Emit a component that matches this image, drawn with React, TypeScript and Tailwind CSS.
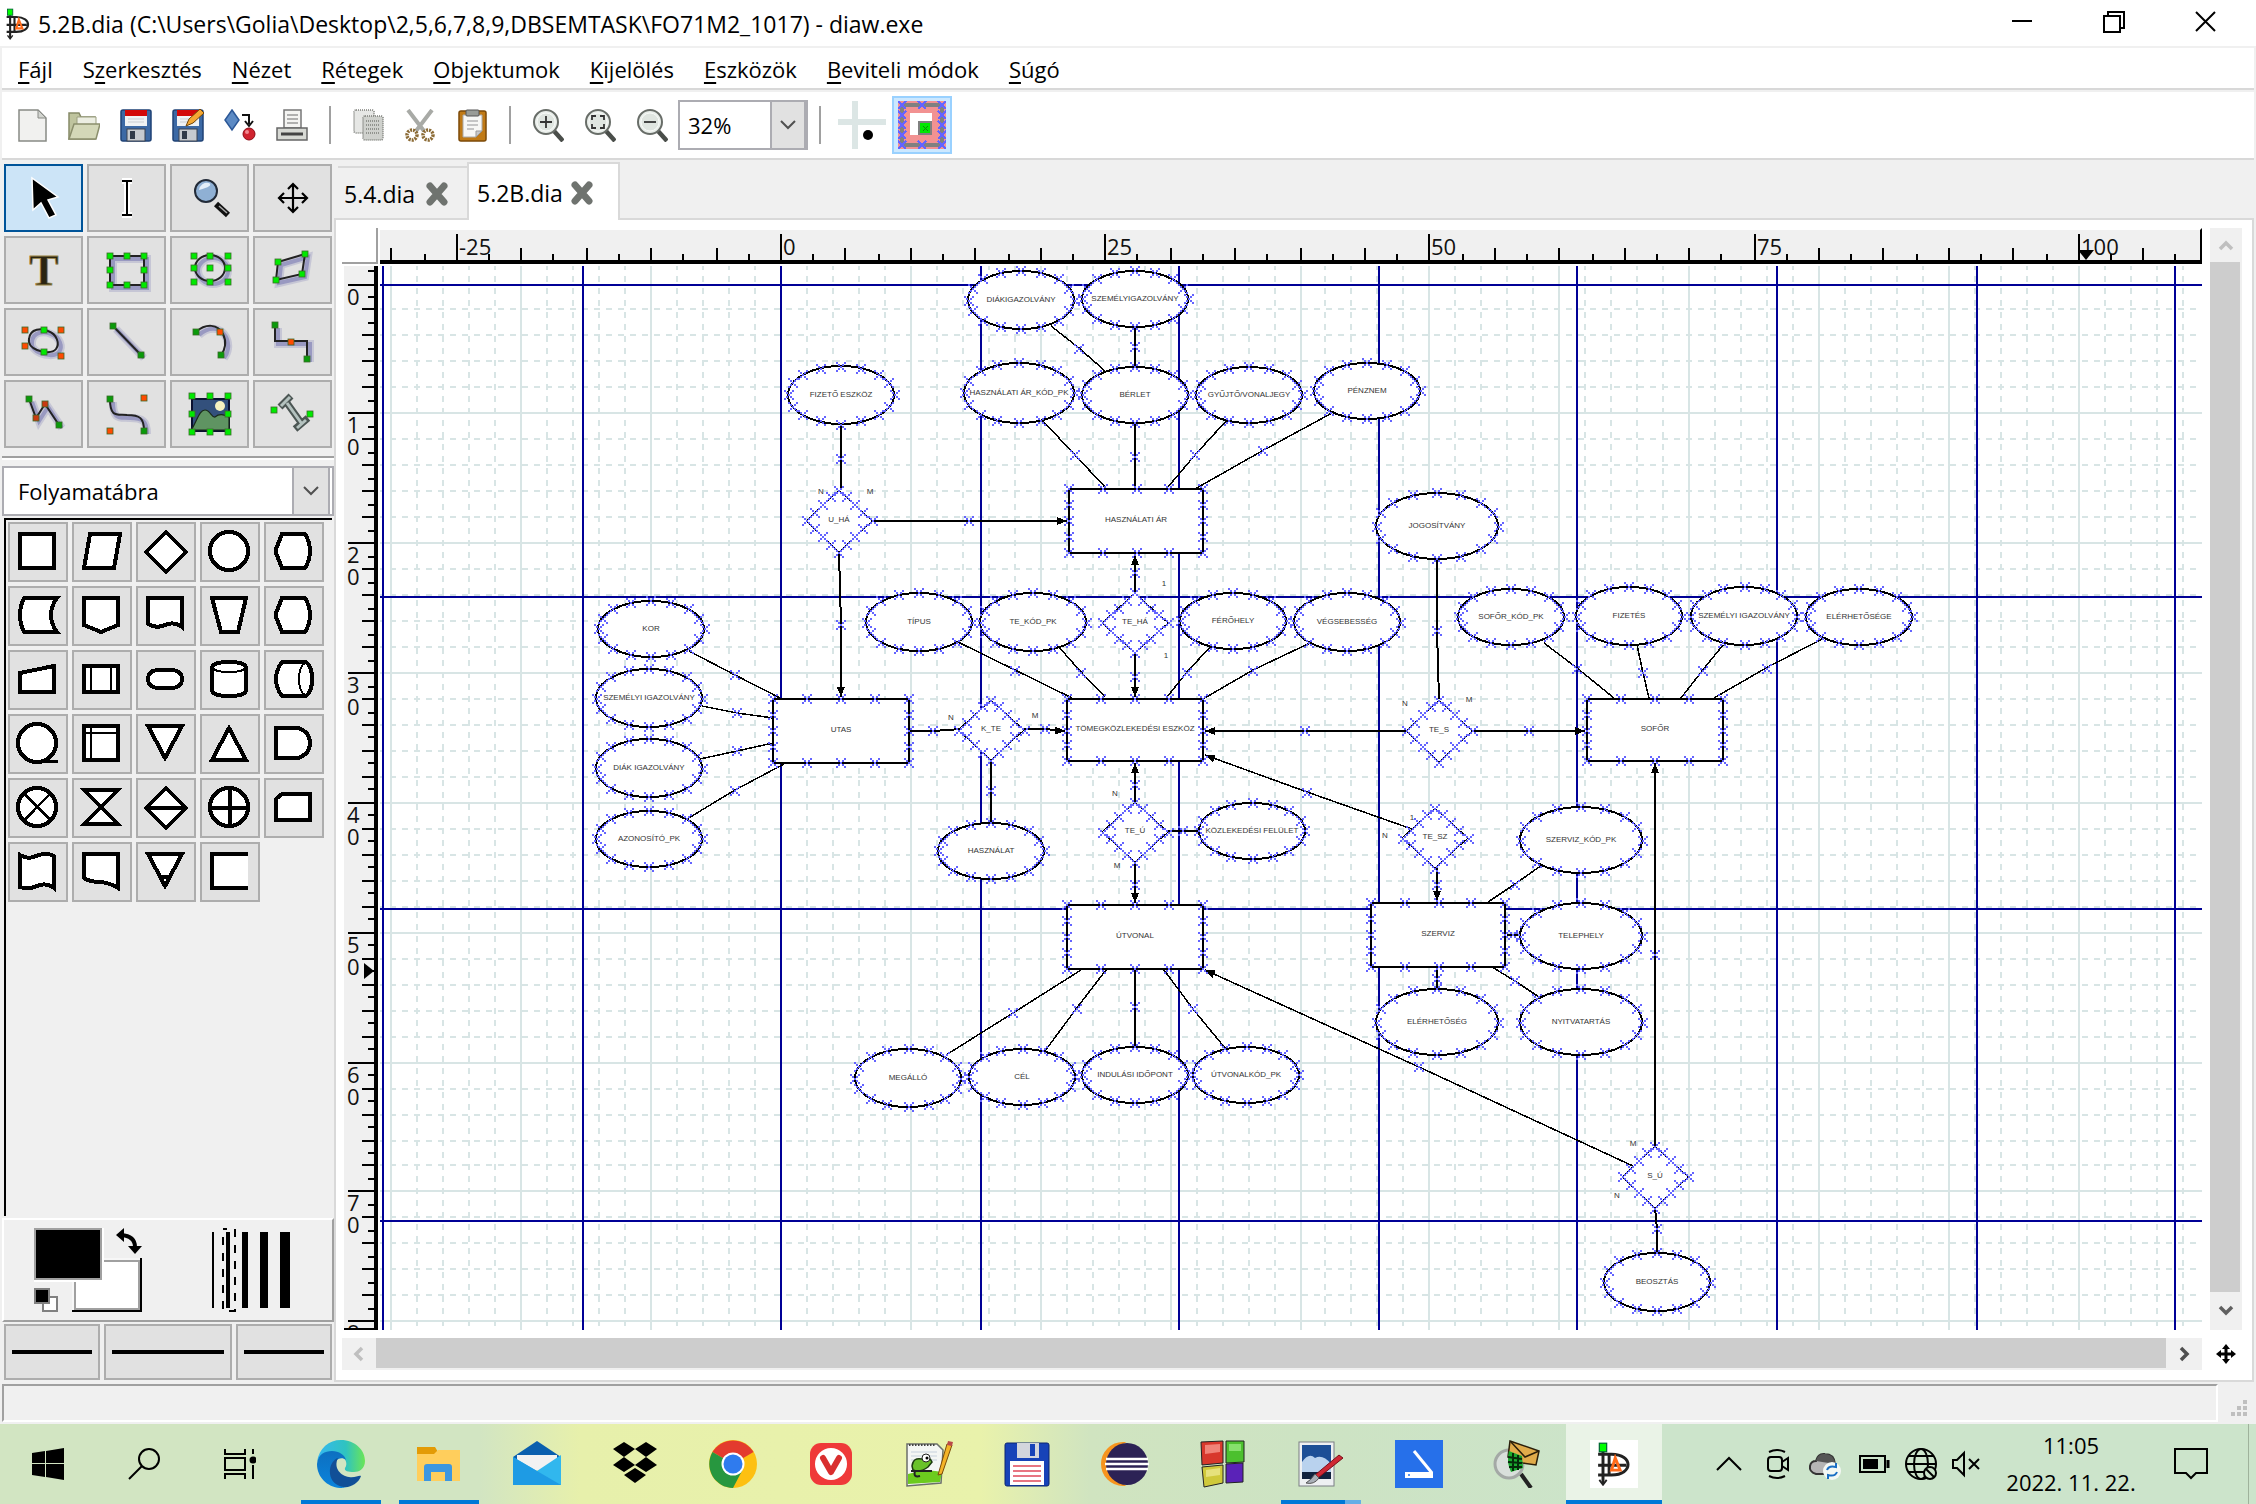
import React from "react";

/* ---------- helpers ---------- */
const odd = (v: number) => 2 * Math.floor(v / 2) + 1;

const MENUS: [string, number][] = [
  ["Fájl", 0],
  ["Szerkesztés", 1],
  ["Nézet", 0],
  ["Rétegek", 0],
  ["Objektumok", 0],
  ["Kijelölés", 0],
  ["Eszközök", 0],
  ["Beviteli módok", 0],
  ["Súgó", 0],
];

/* ---------- diagram data ---------- */
type Ell = [string, number, number, number, number];
const ELLIPSES: Ell[] = [
  ["DIÁKIGAZOLVÁNY", 1021, 300, 53, 29],
  ["SZEMÉLYIGAZOLVÁNY", 1135, 299, 53, 28],
  ["HASZNÁLATI ÁR_KÓD_PK", 1019, 393, 55, 30],
  ["BÉRLET", 1135, 395, 53, 28],
  ["GYŰJTŐ/VONALJEGY", 1249, 395, 53, 28],
  ["PÉNZNEM", 1367, 391, 53, 28],
  ["FIZETŐ ESZKÖZ", 841, 395, 53, 29],
  ["JOGOSÍTVÁNY", 1437, 526, 61, 33],
  ["KOR", 651, 629, 53, 28],
  ["SZEMÉLYI IGAZOLVÁNY", 649, 698, 53, 29],
  ["DIÁK IGAZOLVÁNY", 649, 768, 53, 29],
  ["AZONOSÍTÓ_PK", 649, 839, 53, 28],
  ["TÍPUS", 919, 622, 53, 29],
  ["TE_KÓD_PK", 1033, 622, 53, 29],
  ["FÉRŐHELY", 1233, 621, 53, 28],
  ["VÉGSEBESSÉG", 1347, 622, 53, 29],
  ["SOFŐR_KÓD_PK", 1511, 617, 53, 28],
  ["FIZETÉS", 1629, 616, 53, 29],
  ["SZEMÉLYI IGAZOLVÁNY", 1744, 616, 53, 29],
  ["ELÉRHETŐSÉGE", 1859, 617, 53, 28],
  ["HASZNÁLAT", 991, 851, 53, 28],
  ["KÖZLEKEDÉSI FELÜLET", 1252, 831, 53, 28],
  ["SZERVIZ_KÓD_PK", 1581, 840, 61, 33],
  ["TELEPHELY", 1581, 936, 61, 33],
  ["NYITVATARTÁS", 1581, 1022, 61, 33],
  ["ELÉRHETŐSÉG", 1437, 1022, 61, 33],
  ["MEGÁLLÓ", 908, 1078, 53, 29],
  ["CÉL", 1022, 1077, 53, 28],
  ["INDULÁSI IDŐPONT", 1135, 1075, 53, 28],
  ["ÚTVONALKÓD_PK", 1246, 1075, 53, 28],
  ["BEOSZTÁS", 1657, 1282, 53, 29],
];
const RECTS: Ell[] = [
  ["HASZNÁLATI ÁR", 1069, 489, 1203, 553],
  ["UTAS", 773, 699, 909, 763],
  ["TÖMEGKÖZLEKEDÉSI ESZKÖZ", 1067, 699, 1203, 761],
  ["SOFŐR", 1587, 699, 1723, 761],
  ["ÚTVONAL", 1067, 905, 1203, 969],
  ["SZERVIZ", 1371, 903, 1505, 967],
];
const DIAMONDS: Ell[] = [
  ["U_HÁ", 839, 521, 33, 31],
  ["TE_HÁ", 1135, 623, 33, 30],
  ["K_TE", 991, 730, 33, 30],
  ["TE_Ú", 1135, 832, 33, 30],
  ["TE_S", 1439, 731, 33, 31],
  ["TE_SZ", 1435, 838, 33, 30],
  ["S_Ú", 1655, 1177, 33, 31],
];
/* x1, y1, x2, y2, midpoint x, midpoint y, arrow at the end */
const LINKS: number[][] = [
  [841, 424, 841, 490, 841, 458, 0],
  [873, 521, 1067, 521, 969, 521, 1],
  [839, 552, 841, 697, 841, 624, 1],
  [1051, 326, 1105, 371, 1079, 348, 0],
  [1135, 327, 1135, 367, 1135, 347, 0],
  [1043, 421, 1105, 487, 1075, 455, 0],
  [1135, 423, 1135, 489, 1135, 456, 0],
  [1226, 421, 1168, 487, 1195, 455, 0],
  [1332, 413, 1195, 489, 1262, 451, 0],
  [1135, 594, 1135, 555, 1135, 573, 1],
  [1135, 653, 1135, 697, 1135, 676, 1],
  [1437, 560, 1439, 699, 1437, 630, 0],
  [1407, 731, 1205, 731, 1305, 731, 1],
  [1472, 731, 1585, 731, 1529, 731, 1],
  [1412, 829, 1205, 755, 1307, 792, 1],
  [1437, 867, 1437, 901, 1437, 885, 1],
  [1542, 865, 1488, 902, 1515, 884, 0],
  [1507, 935, 1520, 935, 1513, 935, 0],
  [1437, 967, 1437, 989, 1437, 978, 0],
  [1492, 967, 1539, 997, 1515, 981, 0],
  [1655, 1146, 1655, 763, 1655, 954, 1],
  [1633, 1166, 1205, 970, 1419, 1067, 1],
  [1655, 1207, 1657, 1253, 1657, 1229, 0],
  [689, 651, 780, 698, 735, 675, 0],
  [702, 706, 773, 718, 737, 713, 0],
  [700, 759, 773, 743, 737, 751, 0],
  [687, 819, 784, 764, 735, 790, 0],
  [958, 642, 1072, 698, 1015, 670, 0],
  [1058, 646, 1105, 697, 1081, 672, 0],
  [1210, 647, 1167, 697, 1187, 672, 0],
  [1310, 643, 1203, 699, 1253, 670, 0],
  [961, 729, 909, 731, 933, 731, 0],
  [1023, 729, 1065, 731, 1045, 729, 1],
  [991, 760, 991, 823, 991, 791, 0],
  [1135, 803, 1135, 763, 1135, 784, 1],
  [1135, 861, 1135, 903, 1135, 884, 1],
  [1168, 831, 1200, 831, 1183, 831, 0],
  [1544, 643, 1614, 698, 1577, 668, 0],
  [1637, 645, 1649, 698, 1643, 673, 0],
  [1723, 645, 1681, 698, 1702, 671, 0],
  [1822, 639, 1714, 698, 1766, 668, 0],
  [946, 1055, 1081, 970, 1013, 1013, 0],
  [1045, 1051, 1106, 970, 1076, 1009, 0],
  [1135, 1047, 1135, 969, 1135, 1007, 0],
  [1225, 1048, 1164, 970, 1193, 1009, 0],
];
const CARDINALITIES: [string, number, number][] = [
  ["N", 821, 491],
  ["M", 870, 491],
  ["1", 1164, 583],
  ["1", 1166, 655],
  ["N", 951, 717],
  ["M", 1035, 715],
  ["N", 1115, 793],
  ["M", 1117, 865],
  ["N", 1405, 703],
  ["M", 1469, 699],
  ["1", 1412, 817],
  ["N", 1385, 835],
  ["M", 1633, 1143],
  ["N", 1617, 1195],
];
const PAGE_X = [383, 583, 781, 981, 1179, 1379, 1577, 1777, 1977, 2175, 2375, 2573];
const PAGE_Y = [285, 597, 909, 1221, 1533];

/* small pixel cross that marks a connection point */
function cross(x: number, y: number) {
  const cx = odd(x);
  const cy = odd(y);
  let d = "";
  for (const [dx, dy] of [
    [-4, -4], [-2, -2], [0, 0], [2, 2], [4, 4], [4, -4], [2, -2], [-2, 2], [-4, 4],
  ]) {
    d += `M${cx + dx - 1} ${cy + dy - 1}h2v2h-2z`;
  }
  return d;
}

function diagramCrosses() {
  let d = "";
  for (const [, cx, cy, rx, ry] of ELLIPSES)
    for (let i = 0; i < 16; i++) {
      const a = (i * Math.PI) / 8;
      d += cross(cx + rx * Math.cos(a), cy + ry * Math.sin(a));
    }
  for (const [, x1, y1, x2, y2] of RECTS)
    for (let i = 0; i < 5; i++) {
      const x = x1 + ((x2 - x1) * i) / 4;
      const y = y1 + ((y2 - y1) * i) / 4;
      d += cross(x, y1) + cross(x, y2);
      if (i > 0 && i < 4) d += cross(x1, y) + cross(x2, y);
    }
  for (const [, cx, cy, w, h] of DIAMONDS)
    for (let i = 0; i < 4; i++) {
      const t = i / 4;
      d += cross(cx + w * t, cy - h * (1 - t));
      d += cross(cx + w * (1 - t), cy + h * t);
      d += cross(cx - w * t, cy + h * (1 - t));
      d += cross(cx - w * (1 - t), cy - h * t);
    }
  for (const l of LINKS) d += cross(l[4], l[5]);
  return d;
}

function arrow(l: number[]) {
  const [x1, y1, x2, y2] = l;
  const len = Math.hypot(x2 - x1, y2 - y1);
  const ux = (x2 - x1) / len;
  const uy = (y2 - y1) / len;
  const bx = x2 - ux * 10;
  const by = y2 - uy * 10;
  return `M${x2} ${y2}L${bx - uy * 4} ${by + ux * 4}L${bx + uy * 4} ${by - ux * 4}z`;
}

const isDiagonal = (l: number[]) => Math.abs(l[2] - l[0]) > 10 && Math.abs(l[3] - l[1]) > 10;

function Diagram() {
  const grid: React.ReactNode[] = [];
  for (let k = -15; k < 75; k++) {
    const x = odd(781 + k * 25.95);
    grid.push(
      <path key={"v" + k} d={`M${x} 266V2000`} strokeDasharray={k % 5 ? "6 6" : undefined} strokeDashoffset={2} />
    );
  }
  for (let k = 1; k < 60; k++) {
    const y = odd(284 + k * 25.94);
    grid.push(
      <path key={"h" + k} d={`M380 ${y}H3000`} strokeDasharray={k % 5 ? "6 6" : undefined} strokeDashoffset={2} />
    );
  }
  return (
    <svg className="block h-full w-full bg-white" role="img" aria-label="5.2B.dia" shapeRendering="crispEdges">
      <g transform="translate(-380 -266)">
        <g stroke="#d8e5e5" strokeWidth="2">{grid}</g>
        <g stroke="#000096" strokeWidth="2">
          {PAGE_X.map((x) => (
            <path key={x} d={`M${x} 266V2000`} />
          ))}
          {PAGE_Y.map((y) => (
            <path key={y} d={`M380 ${y}H3000`} />
          ))}
        </g>
        <g fill="#fff" stroke="#000" strokeWidth="2">
          {ELLIPSES.map(([t, cx, cy, rx, ry], i) => (
            <ellipse key={t + i} cx={cx} cy={cy} rx={rx} ry={ry} />
          ))}
          {RECTS.map(([t, a, b, c, d]) => (
            <rect key={t} x={a} y={b} width={c - a} height={d - b} />
          ))}
          {DIAMONDS.map(([t, cx, cy, w, h]) => (
            <path key={t} d={`M${cx} ${cy - h}L${cx + w} ${cy}L${cx} ${cy + h}L${cx - w} ${cy}z`} strokeWidth="1" />
          ))}
          {LINKS.map((l, i) => (
            <path
              key={i}
              d={`M${l[0]} ${l[1]}L${l[4]} ${l[5]}L${l[2]} ${l[3]}`}
              fill="none"
              strokeWidth={isDiagonal(l) ? 1.5 : 2}
            />
          ))}
        </g>
        <path d={LINKS.filter((l) => l[6]).map(arrow).join("")} fill="#000" />
        <path d={diagramCrosses()} fill="#6464ff" />
        <g fill="#333" fontSize="8" textAnchor="middle" fontFamily="'Liberation Sans', sans-serif">
          {ELLIPSES.map(([t, cx, cy], i) => (
            <text key={t + i} x={cx} y={cy + 2}>{t}</text>
          ))}
          {RECTS.map(([t, a, b, c, d]) => (
            <text key={t} x={(a + c) / 2} y={Math.round((b + d) / 2) + 1}>{t}</text>
          ))}
          {DIAMONDS.map(([t, cx, cy]) => (
            <text key={t} x={cx} y={cy + 1}>{t}</text>
          ))}
          {CARDINALITIES.map(([t, x, y], i) => (
            <text key={i} x={x} y={y + 3}>{t}</text>
          ))}
        </g>
      </g>
    </svg>
  );
}

function HorizontalRuler() {
  const items: React.ReactNode[] = [];
  for (let k = -12; k < 60; k++) {
    const x = odd(401 + k * 32.44);
    const top = k % 10 === 0 ? 4 : k % 2 === 0 ? 18 : 24;
    items.push(<path key={k} d={`M${x} ${top}V30`} stroke="#000" strokeWidth="2" />);
    if (k % 10 === 0)
      items.push(
        <text key={"t" + k} x={x + 2} y={25} fontSize="22" fill="#111">{k * 2.5}</text>
      );
  }
  return (
    <svg className="block h-[30px] w-full overflow-x-clip overflow-y-visible" fontFamily="'Open Sans', sans-serif">
      {items}
      <path d="M1698 20H1714L1706 30z" />
    </svg>
  );
}

function VerticalRuler() {
  const items: React.ReactNode[] = [];
  for (let k = -1; k < 110; k++) {
    const y = odd(18 + k * 12.97);
    const left = k % 10 === 0 ? 4 : k % 2 === 0 ? 18 : 24;
    items.push(<path key={k} d={`M${left} ${y}H30`} stroke="#000" strokeWidth="2" />);
    if (k % 10 === 0)
      String(k).split("").forEach((c, i) =>
        items.push(
          <text key={"t" + k + i} x={3} y={y + 20 + i * 22} fontSize="22" fill="#111">{c}</text>
        )
      );
  }
  return (
    <svg className="block h-full w-[30px]" fontFamily="'Open Sans', sans-serif">
      {items}
      <path d="M20 697L30 705L20 713z" />
    </svg>
  );
}

/* ---------- logos and toolbar icons ---------- */
function DiaLogo({ className }: { className: string }) {
  return (
    <svg className={className} viewBox="0 0 32 36" fill="none" stroke="#222" strokeWidth="2.4">
      <path d="M3 10H14C32 10 32 27 14 27H3M7 8V34M12 10V27M3 19H26" />
      <path d="M14 23L17 13L21 23z" stroke="#ff6a1a" />
      <path d="M4 31L7 35L10 31" strokeWidth="1.5" />
      <rect x="4" y="1" width="6" height="7" fill="#0f0" stroke="#063" strokeWidth="1" />
    </svg>
  );
}

const Floppy = () => (
  <>
    <rect x="1" y="1" width="30" height="31" rx="2" fill="#3c69a5" stroke="#1f4275" strokeWidth="1.5" />
    <rect x="5" y="1" width="22" height="16" fill="#f0f2f4" />
    <rect x="5" y="1" width="22" height="6" fill="#d30808" />
    <path d="M8 10H24M8 13H24" stroke="#c9cdd2" />
    <rect x="7" y="20" width="18" height="12" fill="#c6cad0" stroke="#3b4350" />
    <rect x="10" y="22" width="5" height="8" fill="#303a4a" />
  </>
);
const Lens = ({ children }: { children?: React.ReactNode }) => (
  <>
    <path d="M22 22L31 32" stroke="#4a4e4a" strokeWidth="4.5" />
    <circle cx="14" cy="13" r="12" fill="#e9eeea" stroke="#686d68" strokeWidth="2" />
    <circle cx="14" cy="13" r="9" fill="#dfe5e0" stroke="#f8faf8" />
    <g stroke="#333" strokeWidth="1.8" fill="none">{children}</g>
  </>
);

const TOOLBAR: Record<string, React.ReactNode> = {
  "Új": (
    <>
      <path d="M3 1H22L30 9V32H3z" fill="#f1f1ef" stroke="#888a85" strokeWidth="1.5" />
      <path d="M22 1V9H30z" fill="#d3d5d0" stroke="#888a85" />
    </>
  ),
  "Megnyitás": (
    <>
      <path d="M1 30V4H11L13 8H27V30z" fill="#bfc49e" stroke="#868a68" strokeWidth="1.5" />
      <path d="M9 8H28V20H9z" fill="#eceee2" stroke="#9b9f80" />
      <path d="M1 30L6 15H32L28 30z" fill="#d4d8b8" stroke="#8b8f6c" strokeWidth="1.5" />
    </>
  ),
  "Mentés": <Floppy />,
  "Mentés másként": (
    <>
      <Floppy />
      <path d="M14 17L17 10L28 0L32 4L21 14z" fill="#f5a833" stroke="#704609" />
    </>
  ),
  "Exportálás": (
    <>
      <path d="M8 1L15 11L8 21L1 11z" fill="#5c8ac4" stroke="#2b5797" strokeWidth="1.5" />
      <path d="M18 6H25V15M21 12L25 17L29 12" fill="none" stroke="#111" strokeWidth="2" />
      <circle cx="25" cy="25" r="6" fill="#d0232f" stroke="#8d0b15" />
      <circle cx="23" cy="23" r="2" fill="#f08a90" />
    </>
  ),
  "Nyomtatás": (
    <>
      <rect x="8" y="1" width="17" height="18" fill="#f4f4f2" stroke="#777" strokeWidth="1.5" />
      <path d="M11 6H22M11 10H22M11 14H22" stroke="#999" strokeWidth="1.5" />
      <path d="M1 19H31V31H1z" fill="#d7d9d4" stroke="#666" strokeWidth="1.5" />
      <path d="M5 25H27" stroke="#444" strokeWidth="3" />
    </>
  ),
  "Másolás": (
    <g strokeDasharray="1 1" stroke="#7d7f7a" strokeWidth="1.6">
      <rect x="2" y="1" width="20" height="23" rx="2" fill="#e6e7e5" />
      <rect x="11" y="7" width="20" height="24" rx="2" fill="#cfd1cd" />
      <path d="M14 12H28M14 16H28M14 20H28M14 24H28" />
    </g>
  ),
  "Kivágás": (
    <>
      <path d="M4 1L20 22M28 1L12 22" stroke="#a8aaa6" strokeWidth="4" />
      <g fill="none" stroke="#8b6a34" strokeWidth="3.5" strokeDasharray="2 1">
        <circle cx="8" cy="26" r="5" />
        <circle cx="24" cy="26" r="5" />
      </g>
    </>
  ),
  "Beillesztés": (
    <>
      <rect x="3" y="2" width="27" height="30" rx="2" fill="#c07a16" stroke="#7c4a08" strokeWidth="1.5" />
      <path d="M7 6H26V22L20 28H7z" fill="#f7f7f5" stroke="#aaa" />
      <path d="M20 28V22H26z" fill="#c9c9c9" stroke="#999" />
      <rect x="10" y="1" width="13" height="6" rx="1" fill="#999c97" stroke="#555" />
      <path d="M11 12H22M11 16H22M11 20H18" stroke="#b5b5b5" strokeWidth="1.5" />
    </>
  ),
  "Nagyítás": <Lens><path d="M8 13H20M14 7V19" /></Lens>,
  "Illesztés": <Lens><path d="M8 11V7H12M16 7H20V11M20 15V19H16M12 19H8V15" /></Lens>,
  "Kicsinyítés": <Lens><path d="M8 13H20" /></Lens>,
};

function ToolbarButton({ name }: { name: string }) {
  return (
    <button aria-label={name} className="flex h-[58px] w-[52px] items-center justify-center">
      <svg className="h-[33px] w-8" viewBox="0 0 32 33" fill="none">{TOOLBAR[name]}</svg>
    </button>
  );
}
const Separator = ({ className }: { className: string }) => (
  <div className={"flex justify-center " + className}>
    <div className="h-[38px] w-0.5 bg-[#a0a0a0]" />
  </div>
);
const Chevron = () => (
  <svg className="h-3 w-5" viewBox="0 0 20 12" fill="none" stroke="#505050" strokeWidth="2">
    <path d="M3 2L10 9L17 2" />
  </svg>
);

/* ---------- toolbox ---------- */
const sq = (c: string, pts: number[][]) =>
  pts.map(([x, y], i) => (
    <rect key={i} x={x - 3} y={y - 3} width="6" height="6" fill={c} stroke="#3a6a2a" strokeWidth="0.8" />
  ));
const G = "#00ea00";
const O = "#ff4a00";
const shadowed = (d: string) => (
  <>
    <path d={d} stroke="#7878b4" strokeOpacity="0.25" strokeWidth="8" transform="translate(3 3)" />
    <path d={d} stroke="#6c6cae" strokeOpacity="0.5" strokeWidth="4" transform="translate(3 3)" />
    <path d={d} stroke="#222" strokeWidth="2" />
  </>
);
const TOOLS: [string, React.ReactNode][] = [
  ["Módosítás", <path d="M-12-20L-11 12L-3 5L5 20L12 17L4 2L14-1z" fill="#000" stroke="#fff" strokeWidth="1.5" />],
  ["Szövegszerkesztés", (
    <>
      <path d="M-5-17H5M0-17V17M-5 17H5" stroke="#fff" strokeWidth="6" />
      <path d="M-5-17H5M0-17V17M-5 17H5" stroke="#000" strokeWidth="2" />
    </>
  )],
  ["Nagyító", (
    <>
      <path d="M6 6L18 17" stroke="#111" strokeWidth="6" />
      <path d="M9 8L17 15" stroke="#aaa" strokeWidth="1.5" />
      <circle cx="-4" cy="-7" r="11" fill="#8fb0d4" stroke="#222b38" strokeWidth="2" />
      <path d="M-11-8A8 8 0 0 1-1-15Q4-12-11-8z" fill="#e4effa" />
    </>
  )],
  ["Görgetés", <path d="M0-14V14M-14 0H14M-5-9L0-14L5-9M-5 9L0 14L5 9M-9-5L-14 0L-9 5M9-5L14 0L9 5" stroke="#000" strokeWidth="2.2" />],
  ["Szöveg", <text x="0" y="15" textAnchor="middle" fontFamily="'Liberation Serif', serif" fontWeight="700" fontSize="44" fill="#2a2412" stroke="#9a8648" strokeWidth="0.8">T</text>],
  ["Téglalap", (
    <>
      {shadowed("M-17-14H17V15H-17z")}
      {sq(G, [[-17, -14], [0, -14], [17, -14], [-17, 0], [17, 0], [-17, 15], [0, 15], [17, 15]])}
    </>
  )],
  ["Ellipszis", (
    <>
      {shadowed("M-15-2A15 13 0 1 1 15-2A15 13 0 1 1-15-2z")}
      {sq(G, [[-16, -14], [0, -14], [18, -14], [-16, -2], [0, -2], [18, -2], [-16, 12], [0, 12], [18, 12]])}
    </>
  )],
  ["Sokszög", (
    <>
      {shadowed("M-15-8L12-16L9 4L-17 10z")}
      {sq(G, [[-15, -8], [12, -16], [9, 4], [-17, 10]])}
    </>
  )],
  ["Bézier-sokszög", (
    <>
      {shadowed("M-15-3C-14-14-2-14 4-11C13-8 16 2 12 7C8 12-2 10-7 8C-12 6-16 2-15-3z")}
      {sq(O, [[-19, -12], [17, -12], [-19, 4], [17, 14]])}
      {sq(G, [[0, -12], [0, 10]])}
    </>
  )],
  ["Vonal", <>{shadowed("M-14-16L14 13")}{sq("#0a9a0a", [[-14, -16], [14, 13]])}</>],
  ["Ív", <>{shadowed("M-14-10C-4-19 8-18 13-8C17 0 15 8 11 13")}{sq("#0a9a0a", [[-14, -10], [11, 13]])}{sq(O, [[10, -10]])}</>],
  ["Cikcakk", <>{shadowed("M-18-17V-1H14V17")}{sq("#0a9a0a", [[-18, -17], [14, 17]])}{sq(O, [[-2, 0]])}</>],
  ["Törött vonal", <>{shadowed("M-15-15L-8 4L1-10L15 11")}{sq("#0a9a0a", [[-15, -15], [15, 11]])}{sq("#c83a10", [[-8, 4], [1, -10]])}</>],
  ["Bézier-görbe", <>{shadowed("M-17-15C-17 4-10 0 0 1C13 1 17 4 17 17")}{sq("#0a9a0a", [[-17, -15], [17, 17]])}{sq(O, [[17, -16], [-17, 17]])}</>],
  ["Kép", (
    <>
      <rect x="-18" y="-15" width="37" height="32" fill="#33507c" stroke="#0a1030" strokeWidth="2" />
      <circle cx="10" cy="-8" r="5" fill="#f6f2c0" />
      <path d="M-18 15C-12 4-10-4-5-4C0-4 2 4 5 3C10-1 14 1 19 3V16H-18z" fill="#5f9462" stroke="#1a2a1a" strokeWidth="1.2" />
      {sq(G, [[-18, -18], [0, -18], [18, -18], [-18, 0], [18, 0], [-18, 18], [0, 18], [18, 18]])}
    </>
  )],
  ["Körvonal", (
    <>
      <path d="M-13-7L-2-18M-6-11L9 10M2 15L15 4" stroke="#4c5654" strokeWidth="7" />
      <path d="M-12-8L-3-17M-6-11L9 10M4 14L13 6" stroke="#b4c2bf" strokeWidth="3" />
      {sq(G, [[-19, -4], [17, 0]])}
    </>
  )],
];

/* ---------- flowchart palette ---------- */
const CIRCLE = "M10 29A19 19 0 1 1 48 29A19 19 0 1 1 10 29z";
const HEX = "M18 12H41Q46 20 46 29Q46 38 41 46H18L12 31V27z";
const SHAPES: [string, string, string?][] = [
  ["Folyamat", "M12 12H46V46H12z"],
  ["Bemenet/kimenet", "M18 12H48L42 46H12z"],
  ["Döntés", "M30 10L50 30L30 50L10 30z"],
  ["Csatlakozó", CIRCLE],
  ["Előkészítés", HEX],
  ["Tranzakciós fájl", "M16 12H49Q43 20 43 29Q43 38 49 46H16Q12 38 12 29Q12 20 16 12z"],
  ["Lapon kívüli csatlakozó", "M12 12H46V39L29 46L12 39z"],
  ["Dokumentum", "M12 12H46V41Q38 35 29 39Q20 43 12 38z"],
  ["Kézi művelet", "M12 12H46L38 46H21z"],
  ["Kijelző", HEX],
  ["Kézi bevitel", "M12 23L46 16V42H12z"],
  ["Előre meghatározott folyamat", "M12 16H46V42H12z", "M19 16V42M39 16V42"],
  ["Záró", "M21 20H37Q46 21 46 29Q46 37 37 38H21Q12 37 12 29Q12 21 21 20z"],
  ["Mágneslemez", "M12 17Q14 12 29 12Q44 12 46 17V41Q44 46 29 46Q14 46 12 41z", "M12 17Q14 22 29 22Q44 22 46 17"],
  ["Mágnesdob", "M18 12H42Q48 16 48 29Q48 42 42 46H18Q12 38 12 29Q12 20 18 12z", "M42 12Q35 16 35 29Q35 42 42 46"],
  ["Mágnesszalag", CIRCLE, "M29 48H50M29 47H50"],
  ["Belső tároló", "M12 12H46V46H12z", "M19 12V46M12 19H46"],
  ["Egyesítés", "M12 12H46L29 44z"],
  ["Kivonat", "M29 14L46 46H12z"],
  ["Késleltetés", "M12 14H34Q46 18 46 29Q46 40 34 44H12z"],
  ["Összegzés", CIRCLE, "M16 16L42 42M42 16L16 42M16 15L43 42M43 15L16 43"],
  ["Leválogatás", "M12 12H46L12 46H46z"],
  ["Rendezés", "M30 10L50 30L30 50L10 30z", "M10 29H50M10 31H50"],
  ["Vagy", CIRCLE, "M29 10V48M31 10V48M10 29H48M10 31H48"],
  ["Lyukkártya", "M18 16H46V42H12V21z"],
  ["Lyukszalag", "M12 13Q20 18 28 14Q38 10 46 14V46Q38 40 29 44Q20 48 12 45z"],
  ["Átviteli szalag", "M12 12H46V46Q38 41 29 40Q18 40 12 36z"],
  ["Kapcsolat nélküli tároló", "M12 12H46L29 44z", "M23 34H35M24 36H34"],
  ["Megjegyzés", "M48 12H12V46H48"],
];

const TOOL_BTN = "flex h-[68px] items-center justify-center border-2 ";

function LeftPanel() {
  return (
    <aside className="flex w-[334px] shrink-0 flex-col pb-0.5 pt-1">
      <div className="grid grid-cols-4 gap-1 pl-1 pr-0.5">
        {TOOLS.map(([name, art], i) => (
          <button
            key={name}
            aria-label={name}
            className={TOOL_BTN + (i === 0 ? "border-[#005499] bg-[#cce4f7]" : "border-[#adadad] bg-[#e1e1e1]")}
          >
            <svg className="h-12 w-12" viewBox="-24 -24 48 48" fill="none">{art}</svg>
          </button>
        ))}
      </div>
      <div className="ml-0.5 mt-2 h-1 border-b-2 border-t-2 border-b-white border-t-[#a0a0a0]" />
      <div className="relative ml-0.5 mt-1.5 h-[50px]">
        <select
          aria-label="Alakzatkészlet"
          className="h-full w-full appearance-none border-2 border-[#acacb2] bg-white pl-3.5 font-[Open_Sans] text-[22px] text-black"
        >
          <option>Folyamatábra</option>
        </select>
        <span className="pointer-events-none absolute inset-y-0 right-1 flex w-[38px] items-center justify-center border-2 border-[#acacb2] bg-[#e1e1e1]">
          <Chevron />
        </span>
      </div>
      <div className="ml-1 mr-0.5 mt-0.5 flex-1 border-l-2 border-t-2 border-black pl-0.5 pt-0.5">
        <div className="grid grid-cols-[repeat(5,60px)] gap-1">
          {SHAPES.map(([name, d, extra]) => (
            <button key={name} aria-label={name} className="h-[60px] border-2 border-[#adadad] bg-[#e1e1e1]">
              <svg className="h-14 w-14" viewBox="2 2 56 56" fill="#fff" stroke="#000" strokeWidth="4" shapeRendering="crispEdges">
                <path d={d} />
                {extra && <path d={extra} fill="none" strokeWidth="2" />}
              </svg>
            </button>
          ))}
        </div>
      </div>
      <div className="ml-0.5 mt-0.5 flex h-[104px] border-b-2 border-l-2 border-r-2 border-t-2 border-b-[#a0a0a0] border-l-white border-r-[#a0a0a0] border-t-white">
        <svg className="h-[100px] w-[328px]" viewBox="4 1220 328 100" role="img" aria-label="Színek és vonalvastagság">
          <g shapeRendering="crispEdges">
            <rect x="72" y="1258" width="70" height="54" fill="#000" />
            <rect x="72" y="1258" width="68" height="52" fill="#f7f7f7" />
            <rect x="74" y="1260" width="66" height="50" fill="#a0a0a0" />
            <rect x="76" y="1262" width="62" height="46" fill="#fff" />
            <rect x="34" y="1228" width="70" height="54" fill="#fff" />
            <rect x="34" y="1228" width="68" height="52" fill="#a0a0a0" />
            <rect x="36" y="1230" width="64" height="48" fill="#000" />
            <rect x="43" y="1297" width="14" height="14" fill="#fff" stroke="#808080" strokeWidth="2" />
            <rect x="35" y="1289" width="14" height="14" fill="#000" stroke="#808080" strokeWidth="2" />
            <rect x="212" y="1232" width="2" height="76" />
            <rect x="226" y="1232" width="4" height="76" />
            <rect x="242" y="1232" width="6" height="76" />
            <rect x="260" y="1232" width="8" height="76" />
            <rect x="280" y="1232" width="10" height="76" />
            <rect x="223" y="1229" width="12" height="82" fill="none" stroke="#000" strokeWidth="2" strokeDasharray="8 8" strokeDashoffset="4" />
          </g>
          <path d="M121 1235Q135 1236 135 1247" fill="none" stroke="#000" strokeWidth="4" />
          <path d="M116 1235L124 1228V1242zM128 1246H142L135 1254z" />
        </svg>
      </div>
      <div className="ml-1 mr-0.5 mt-0.5 grid grid-cols-[96px_1fr_96px] gap-1">
        {["Kezdő nyílhegy", "Vonalstílus", "Záró nyílhegy"].map((n) => (
          <button key={n} aria-label={n} className="flex h-14 items-center border-2 border-[#adadad] bg-[#e1e1e1] px-1.5">
            <span className="h-1 w-full bg-black" />
          </button>
        ))}
      </div>
    </aside>
  );
}

const TabClose = () => (
  <svg className="h-6 w-6" viewBox="0 0 24 24" stroke="#6f736f" strokeWidth="7" strokeLinecap="round">
    <path d="M5 4L19 20M19 4L5 20" />
  </svg>
);

function ScrollArrow({ d, label, color, className }: { d: string; label: string; color: string; className: string }) {
  return (
    <button aria-label={label} className={"flex shrink-0 items-center justify-center " + className}>
      <svg className="h-4 w-4" viewBox="0 0 16 16" fill="none" stroke={color} strokeWidth="3.5">
        <path d={d} />
      </svg>
    </button>
  );
}

function Notebook() {
  return (
    <main className="flex min-w-0 flex-1 flex-col pr-0.5">
      <div role="tablist" className="flex h-[58px] items-end pl-1 text-[23px]">
        <div role="tab" className="flex h-[52px] w-[129px] items-center justify-between border-t-2 border-[#d9d9d9] pl-1.5 pr-[18px] pt-0.5">
          5.4.dia <TabClose />
        </div>
        <div role="tab" aria-selected className="z-10 -mb-0.5 flex h-[58px] w-[153px] items-center justify-between border-x-2 border-t-2 border-[#d9d9d9] bg-white pl-2 pr-6 pt-0.5">
          5.2B.dia <TabClose />
        </div>
      </div>
      <div className="grid min-h-0 flex-1 grid-cols-[38px_minmax(0,1fr)_40px] grid-rows-[38px_minmax(0,1fr)_40px] border-2 border-[#d9d9d9] bg-white pb-2.5 pl-1.5 pr-2.5 pt-2">
        <div className="h-9 w-9 border-b-2 border-r-2 border-[#a0a0a0]" />
        <div className="h-9 border-b-4 border-r-2 border-t-2 border-b-black border-r-black border-t-white bg-[#f0f0f0]">
          <HorizontalRuler />
        </div>
        <div className="row-span-2 flex flex-col pl-2">
          <div className="flex min-h-0 flex-1 flex-col bg-[#f0f0f0]">
            <ScrollArrow label="Fel" d="M2 12L8 6L14 12" color="#bfbfbf" className="h-[34px]" />
            <div className="mr-0.5 flex-1 bg-[#cdcdcd]" />
            <ScrollArrow label="Le" d="M2 4L8 10L14 4" color="#606060" className="h-[38px]" />
          </div>
        </div>
        <div className="ml-0.5 mr-0.5 overflow-hidden border-b-2 border-r-4 border-black bg-[#f0f0f0]">
          <VerticalRuler />
        </div>
        <div className="overflow-hidden">
          <Diagram />
        </div>
        <div className="col-span-2 flex pt-2">
          <div className="flex flex-1 bg-[#f0f0f0]">
            <ScrollArrow label="Balra" d="M11 2L5 8L11 14" color="#bfbfbf" className="w-[34px]" />
            <div className="mb-0.5 flex-1 bg-[#cdcdcd]" />
            <ScrollArrow label="Jobbra" d="M5 2L11 8L5 14" color="#505050" className="w-9" />
          </div>
        </div>
        <button aria-label="Navigáció" className="flex items-center justify-center pl-2 pt-2">
          <svg className="h-5 w-5" viewBox="0 0 20 20">
            <path d="M10 3V17M3 10H17" stroke="#000" strokeWidth="3" />
            <path d="M10 0L14 5H6zM10 20L14 15H6zM0 10L5 6V14zM20 10L15 6V14z" />
          </svg>
        </button>
      </div>
    </main>
  );
}

/* ---------- taskbar ---------- */
const TASKS: [string, React.ReactNode, number][] = [
  ["Microsoft Edge", (
    <>
      <defs>
        <linearGradient id="eg" x1="0" x2="1"><stop offset="0" stopColor="#35b8f1" /><stop offset="0.6" stopColor="#2fc3c0" /><stop offset="1" stopColor="#6be556" /></linearGradient>
        <linearGradient id="eb" x1="0" y1="0" x2="0" y2="1"><stop offset="0" stopColor="#0d6fc0" /><stop offset="1" stopColor="#0a84dc" /></linearGradient>
      </defs>
      <path d="M0 22C2 8 12 0 24 0C38 0 48 10 48 21C48 29 42 32 37 32C31 32 27 31 28 28C31 24 29 18 23 16C14 10 3 13 0 22z" fill="url(#eg)" />
      <path d="M0 24C1 14 8 11 15 11C22 11 28 15 29 20C26 17 21 18 19 21C12 32 22 45 33 45C28 48 25 48 23 48C10 47 0 37 0 24z" fill="url(#eb)" />
      <path d="M13 34C12 25 17 19 21 18C16 28 24 36 32 37C38 38 42 35 44 36C42 43 33 48 27 47C19 46 14 41 13 34z" fill="#114f97" />
    </>
  ), 1],
  ["Fájlkezelő", (
    <>
      <path d="M2 7H20L23 12V18H2z" fill="#e39b06" />
      <path d="M2 14H19L23 10H45V41H2z" fill="#ffce5c" />
      <path d="M9 41V27Q9 24 12 24H34Q37 24 37 27V41H30V32H16V41z" fill="#3d97e0" />
    </>
  ), 1],
  ["Posta", (
    <>
      <path d="M0 17L24 1L48 17V24H0z" fill="#0a5fae" />
      <path d="M4 15H44V30H4z" fill="#f2f2f2" />
      <path d="M0 17L24 31L48 15V45H0z" fill="#31b7ee" />
      <path d="M0 17L48 45H0z" fill="#1e9be4" />
    </>
  ), 0],
  ["Dropbox", <path d="M13 2L24 9L13 17L2 9zM35 2L46 9L35 17L24 9zM13 17L24 25L13 32L2 25zM35 17L46 25L35 32L24 25zM24 28L35 35L24 43L13 35z" fill="#000" />, 0],
  ["Google Chrome", (
    <>
      <circle cx="24" cy="24" r="24" fill="#fdc011" />
      <path d="M24 24L3.5 12A24 24 0 0 1 44.5 12z" fill="#e33b2e" />
      <path d="M3.5 12A24 24 0 0 0 24 48L34 29L24 24z" fill="#27973f" />
      <circle cx="24" cy="24" r="11.5" fill="#fff" />
      <circle cx="24" cy="24" r="9.5" fill="#2f7bee" />
    </>
  ), 0],
  ["Vivaldi", (
    <>
      <rect x="3" y="3" width="42" height="42" rx="11" fill="#ef3939" />
      <circle cx="24" cy="24" r="16" fill="#fff" />
      <path d="M16 18L24 32L32 18" fill="none" stroke="#d92e2e" strokeWidth="6" strokeLinecap="round" strokeLinejoin="round" />
    </>
  ), 0],
  ["Notepad++", (
    <>
      <path d="M2 4H32L38 10L36 43L2 46z" fill="#f4f6f4" stroke="#6b6f6b" strokeWidth="1.5" />
      <path d="M4 5H31" stroke="#444" strokeWidth="2" strokeDasharray="1.5 1.5" />
      <path d="M6 12H32M6 16H32M6 20H32" stroke="#c6d0dc" />
      <path d="M3 34Q20 28 37 32L35 42L3 44z" fill="#6ccb1e" />
      <path d="M7 26Q8 17 17 19Q25 16 27 22L23 27Q15 33 8 30z" fill="#69c22a" stroke="#1c3a10" strokeWidth="1.5" />
      <circle cx="21" cy="18" r="4" fill="#fff" stroke="#222" />
      <circle cx="22" cy="18" r="1.5" />
      <path d="M6 31H27M10 31Q8 38 15 36" stroke="#222" strokeWidth="2" fill="none" />
      <path d="M42 4L47 5L37 34L33 35z" fill="#f4b428" stroke="#7a4a0a" />
      <path d="M43 1L48 2L47 6L42 5z" fill="#b94a4a" />
    </>
  ), 0],
  ["Total Commander", (
    <>
      <rect x="2" y="3" width="44" height="43" rx="2" fill="#1743b8" stroke="#0c2670" />
      <rect x="14" y="3" width="22" height="15" fill="#d3d6dc" />
      <rect x="27" y="4" width="5" height="12" fill="#1743b8" />
      <rect x="7" y="21" width="34" height="24" fill="#fff" />
      <path d="M10 26H38M10 31H38M10 36H38M10 41H38" stroke="#e0485a" strokeWidth="1.5" />
    </>
  ), 0],
  ["Eclipse", (
    <>
      <path d="M22 3A21 21 0 0 0 22 45A25 25 0 0 1 22 3z" fill="#f7941e" stroke="#f7941e" strokeWidth="2" />
      <circle cx="26" cy="24" r="21" fill="#2c2255" />
      <path d="M5 19H47M4 24H48M5 29H47" stroke="#fff" strokeWidth="2.5" />
    </>
  ), 0],
  ["Code::Blocks", (
    <g stroke="#222">
      <path d="M2 2L24 1V23L3 25z" fill="#d8382c" />
      <path d="M6 5L21 4V12L6 14z" fill="#f08478" stroke="none" />
      <path d="M27 1H45V22L27 23z" fill="#4cc02e" />
      <path d="M30 4H42V11H30z" fill="#86e06c" stroke="none" />
      <path d="M3 27L24 25V43L5 47z" fill="#cfc93a" />
      <path d="M7 30L21 28V35L7 37z" fill="#e6e27c" stroke="none" />
      <path d="M27 24L44 23V42L27 43z" fill="#5a22b8" />
    </g>
  ), 0],
  ["Képszerkesztő", (
    <>
      <rect x="2" y="2" width="35" height="44" fill="#eef0f2" stroke="#7b7f84" />
      <rect x="5" y="5" width="29" height="34" fill="#1d4f96" />
      <path d="M5 22Q12 12 18 18Q26 14 34 24V34H5z" fill="#b9d2ee" />
      <path d="M5 32H34V39H5z" fill="#12233e" />
      <path d="M42 15L46 18L21 38L18 35z" fill="#cf2834" stroke="#7a0e18" />
      <path d="M18 34L22 38Q17 45 9 43Q14 40 18 34z" fill="#aab0b8" stroke="#555" />
    </>
  ), 2],
  ["Szkenner", (
    <>
      <rect width="48" height="48" fill="#2670ea" />
      <path d="M19 11L37 33" stroke="#fff" strokeWidth="3" />
      <path d="M10 32H38V38H10z" fill="#fff" />
      <circle cx="14" cy="35" r="1" fill="#2670ea" />
    </>
  ), 0],
  ["Levélkereső", (
    <>
      <path d="M28 34L38 48" stroke="#222" strokeWidth="4" />
      <circle cx="16" cy="24" r="14" fill="#d9dfdb" stroke="#a4a9a6" strokeWidth="3" />
      <path d="M17 1L46 11L43 25L30 23L15 17z" fill="#e0ab4a" stroke="#2b1f0a" strokeWidth="1.5" />
      <path d="M18 2L32 17L46 11" fill="none" stroke="#2b1f0a" strokeWidth="1.5" />
      <path d="M16 11L29 16L30 28L18 32Q13 22 16 11z" fill="#1aa82e" />
      <path d="M15 17L29 19M15 22L29 23M16 27L29 27M20 13V31M25 15V30" stroke="#052a0a" strokeWidth="2" />
    </>
  ), 0],
];

function Taskbar() {
  return (
    <footer className="flex h-20 shrink-0 items-stretch bg-[linear-gradient(90deg,#d2e5c2_0px,#d2e5c2_480px,#e7f0ab_580px,#e9f2ab_980px,#d0e4c0_1090px,#cde3c3_1300px,#cce4cb_1664px)] text-black">
      <button aria-label="Start" className="flex w-24 items-center justify-center">
        <svg className="h-8 w-8" viewBox="0 0 32 32"><path d="M0 5L13 3V15H0zM14 3L32 0V15H14zM0 16H13V29L0 27zM14 16H32V32L14 29z" /></svg>
      </button>
      <button aria-label="Keresés" className="flex w-24 items-center justify-center">
        <svg className="h-8 w-8" viewBox="0 0 32 32" fill="none" stroke="#000" strokeWidth="2"><circle cx="21" cy="11" r="10" /><path d="M14 18L1 31" /></svg>
      </button>
      <button aria-label="Feladatnézet" className="flex w-24 items-center justify-center">
        <svg className="h-8 w-8" viewBox="0 0 32 32" fill="none" stroke="#000" strokeWidth="2">
          <path d="M1 1V6H21V1M1 31V26H21V31M1 10H21V22H1zM29 1V6M29 17V31" />
          <circle cx="29" cy="12" r="2.5" fill="#000" />
        </svg>
      </button>
      <div className="flex pl-1">
        {TASKS.map(([name, art, run]) => (
          <button key={name} aria-label={name} className="relative flex w-[98px] items-center justify-center">
            <svg className="h-12 w-12" viewBox="0 0 48 48">{art}</svg>
            {run > 0 && (
              <span className="absolute inset-x-[9px] bottom-0 flex h-1">
                <span className="flex-1 bg-[#0078d7]" />
                {run === 2 && <span className="w-4 bg-[#66aee6]" />}
              </span>
            )}
          </button>
        ))}
        <button aria-label="Dia" className="flex w-24 items-center justify-center border-b-4 border-[#0078d7] bg-[#eaf3e7] pt-1">
          <span className="flex h-12 w-12 items-center justify-center bg-white">
            <DiaLogo className="h-11 w-10" />
          </span>
        </button>
      </div>
      <div className="ml-auto flex items-center">
        <svg className="h-10 w-[270px]" viewBox="1712 1444 270 40" fill="none" stroke="#000" strokeWidth="2">
          <path d="M1715 1470L1727 1458L1739 1470" />
          <rect x="1766" y="1457" width="14" height="14" rx="3" />
          <path d="M1780 1462L1786 1458V1470L1780 1466M1767 1452Q1775 1448 1783 1452M1767 1476Q1775 1480 1783 1476" />
          <path d="M1814 1474Q1807 1472 1808 1466Q1809 1461 1814 1461Q1816 1453 1823 1454Q1832 1454 1833 1464V1474z" fill="#b5b5b5" stroke="#333" />
          <path d="M1814 1461Q1816 1453 1823 1454Q1832 1454 1833 1464z" fill="#555" stroke="none" />
          <circle cx="1830" cy="1471" r="9" fill="#f4f8f4" stroke="none" />
          <path d="M1825 1470Q1827 1465 1834 1467V1463M1835 1472Q1833 1477 1826 1475V1479" stroke="#1a6fc4" />
          <rect x="1858" y="1456" width="25" height="16" />
          <rect x="1861" y="1459" width="15" height="10" fill="#000" stroke="none" />
          <path d="M1886 1460V1468" strokeWidth="3" />
          <circle cx="1919" cy="1464" r="15" />
          <ellipse cx="1919" cy="1464" rx="7" ry="15" />
          <path d="M1904 1464H1934M1907 1456H1931M1907 1472H1931" />
          <circle cx="1928" cy="1473" r="6" fill="#cce4cb" />
          <path d="M1924 1469L1932 1477" />
          <path d="M1951 1460H1955L1962 1453V1475L1955 1468H1951zM1967 1459L1977 1469M1977 1459L1967 1469" />
        </svg>
        <div className="flex w-[174px] flex-col items-center text-[22px] leading-[37px]">
          <span>11:05</span>
          <span>2022. 11. 22.</span>
        </div>
        <button aria-label="Értesítések" className="flex w-[66px] items-center justify-center">
          <svg className="h-8 w-[34px]" viewBox="0 0 34 32" fill="none" stroke="#000" strokeWidth="2"><path d="M1 1H33V25H22L17 30L12 25H1z" /></svg>
        </button>
        <div className="ml-6 h-20 w-2 border-l border-[#9fb29c]" />
      </div>
    </footer>
  );
}

export default function App() {
  return (
    <div className="flex h-screen min-h-[1000px] flex-col bg-[#f0f0f0] font-[Open_Sans,sans-serif] text-black">
      <header className="flex h-[46px] shrink-0 items-center bg-white pr-1.5 pt-0.5">
        <DiaLogo className="ml-1 h-9 w-7" />
        <h1 className="ml-1.5 text-[23px] leading-8">5.2B.dia (C:\Users\Golia\Desktop\2,5,6,7,8,9,DBSEMTASK\FO71M2_1017) - diaw.exe</h1>
        <div className="ml-auto flex h-full">
          {[
            ["Kis méret", "M1 10H21"],
            ["Előző méret", "M1 5H17V21H1zM5 5V1H21V17H17"],
            ["Bezárás", "M1 1L20 20M20 1L1 20"],
          ].map(([n, d]) => (
            <button key={n} aria-label={n} className="flex w-[92px] items-center justify-center pb-1 pl-1">
              <svg className="h-[22px] w-[22px]" viewBox="0 0 22 22" fill="none" stroke="#000" strokeWidth="2"><path d={d} /></svg>
            </button>
          ))}
        </div>
      </header>
      <nav className="mx-0.5 mt-0.5 flex h-[42px] shrink-0 items-center border-b-2 border-[#d8d8d8] bg-white pl-px pt-0.5 text-[22px]">
        {MENUS.map(([m, u]) => (
          <button key={m} className="px-[15px] leading-8">
            {m.slice(0, u)}
            <span className="underline decoration-2 underline-offset-4">{m[u]}</span>
            {m.slice(u + 1)}
          </button>
        ))}
      </nav>
      <div role="toolbar" className="mx-0.5 mt-0.5 flex h-[68px] shrink-0 items-center border-b-2 border-[#d8d8d8] bg-white pl-1">
        {["Új", "Megnyitás", "Mentés", "Mentés másként", "Exportálás", "Nyomtatás"].map((n) => (
          <ToolbarButton key={n} name={n} />
        ))}
        <Separator className="w-6" />
        {["Másolás", "Kivágás", "Beillesztés"].map((n) => (
          <ToolbarButton key={n} name={n} />
        ))}
        <Separator className="w-6" />
        {["Nagyítás", "Illesztés", "Kicsinyítés"].map((n) => (
          <ToolbarButton key={n} name={n} />
        ))}
        <div className="flex h-[50px] w-[130px] border-2 border-[#acacb2] bg-white">
          <input aria-label="Nagyítás mértéke" defaultValue="32%" className="w-0 min-w-0 flex-1 pl-2 text-[22px] outline-none" />
          <button aria-label="Nagyítások" className="flex w-9 items-center justify-center border-x-2 border-[#acacb2] bg-[#e1e1e1]">
            <Chevron />
          </button>
        </div>
        <Separator className="w-6" />
        <button aria-label="Rácshoz igazítás" className="ml-1 flex h-[58px] w-[52px] items-center justify-center">
          <svg className="h-12 w-12" viewBox="0 0 48 48">
            <path d="M17 0V48M0 21H48" stroke="#dce6e5" strokeWidth="6" />
            <circle cx="30" cy="34" r="5" />
          </svg>
        </button>
        <button aria-label="Objektumokhoz igazítás" aria-pressed className="ml-1 flex h-[58px] w-[60px] items-center justify-center border-2 border-[#99d1ff] bg-[#cce8ff]">
          <svg className="h-12 w-12" viewBox="0 0 48 48" shapeRendering="crispEdges">
            <rect width="48" height="48" fill="#f29292" />
            <rect x="4" y="4" width="40" height="40" fill="none" stroke="#808080" strokeWidth="4" />
            <rect x="12" y="12" width="22" height="22" fill="#fff" />
            <path d="M20 20H34V34H20z" fill="#808080" />
            <path d="M22 22H32V32H22z" fill="#00e800" />
            <path d="M25 25L30 30M30 25L25 30" stroke="#0a8a0a" strokeWidth="1" />
            <path
              d={[4, 24, 44].map((p) => `M${p - 4} 0l8 8m0-8l-8 8M${p - 4} 40l8 8m0-8l-8 8`).join("") +
                [14, 24, 34].map((p) => `M0 ${p - 4}l8 8m0-8l-8 8M40 ${p - 4}l8 8m0-8l-8 8`).join("")}
              stroke="#6464ff"
              strokeWidth="2"
            />
          </svg>
        </button>
      </div>
      <div className="flex min-h-0 flex-1">
        <LeftPanel />
        <Notebook />
      </div>
      <div className="mt-0.5 flex h-10 shrink-0 items-end pb-0.5 pl-0.5">
        <div className="mr-auto h-full w-full border-2 border-b-white border-l-[#a0a0a0] border-r-white border-t-[#a0a0a0]" />
        <svg className="mx-2 h-[22px] w-[22px] shrink-0" viewBox="0 0 22 22" fill="#bfbfbf">
          <path d="M17 0h4v4h-4zM11 6h4v4h-4zM17 6h4v4h-4zM5 12h4v4h-4zM11 12h4v4h-4zM17 12h4v4h-4z" />
        </svg>
      </div>
      <Taskbar />
    </div>
  );
}
